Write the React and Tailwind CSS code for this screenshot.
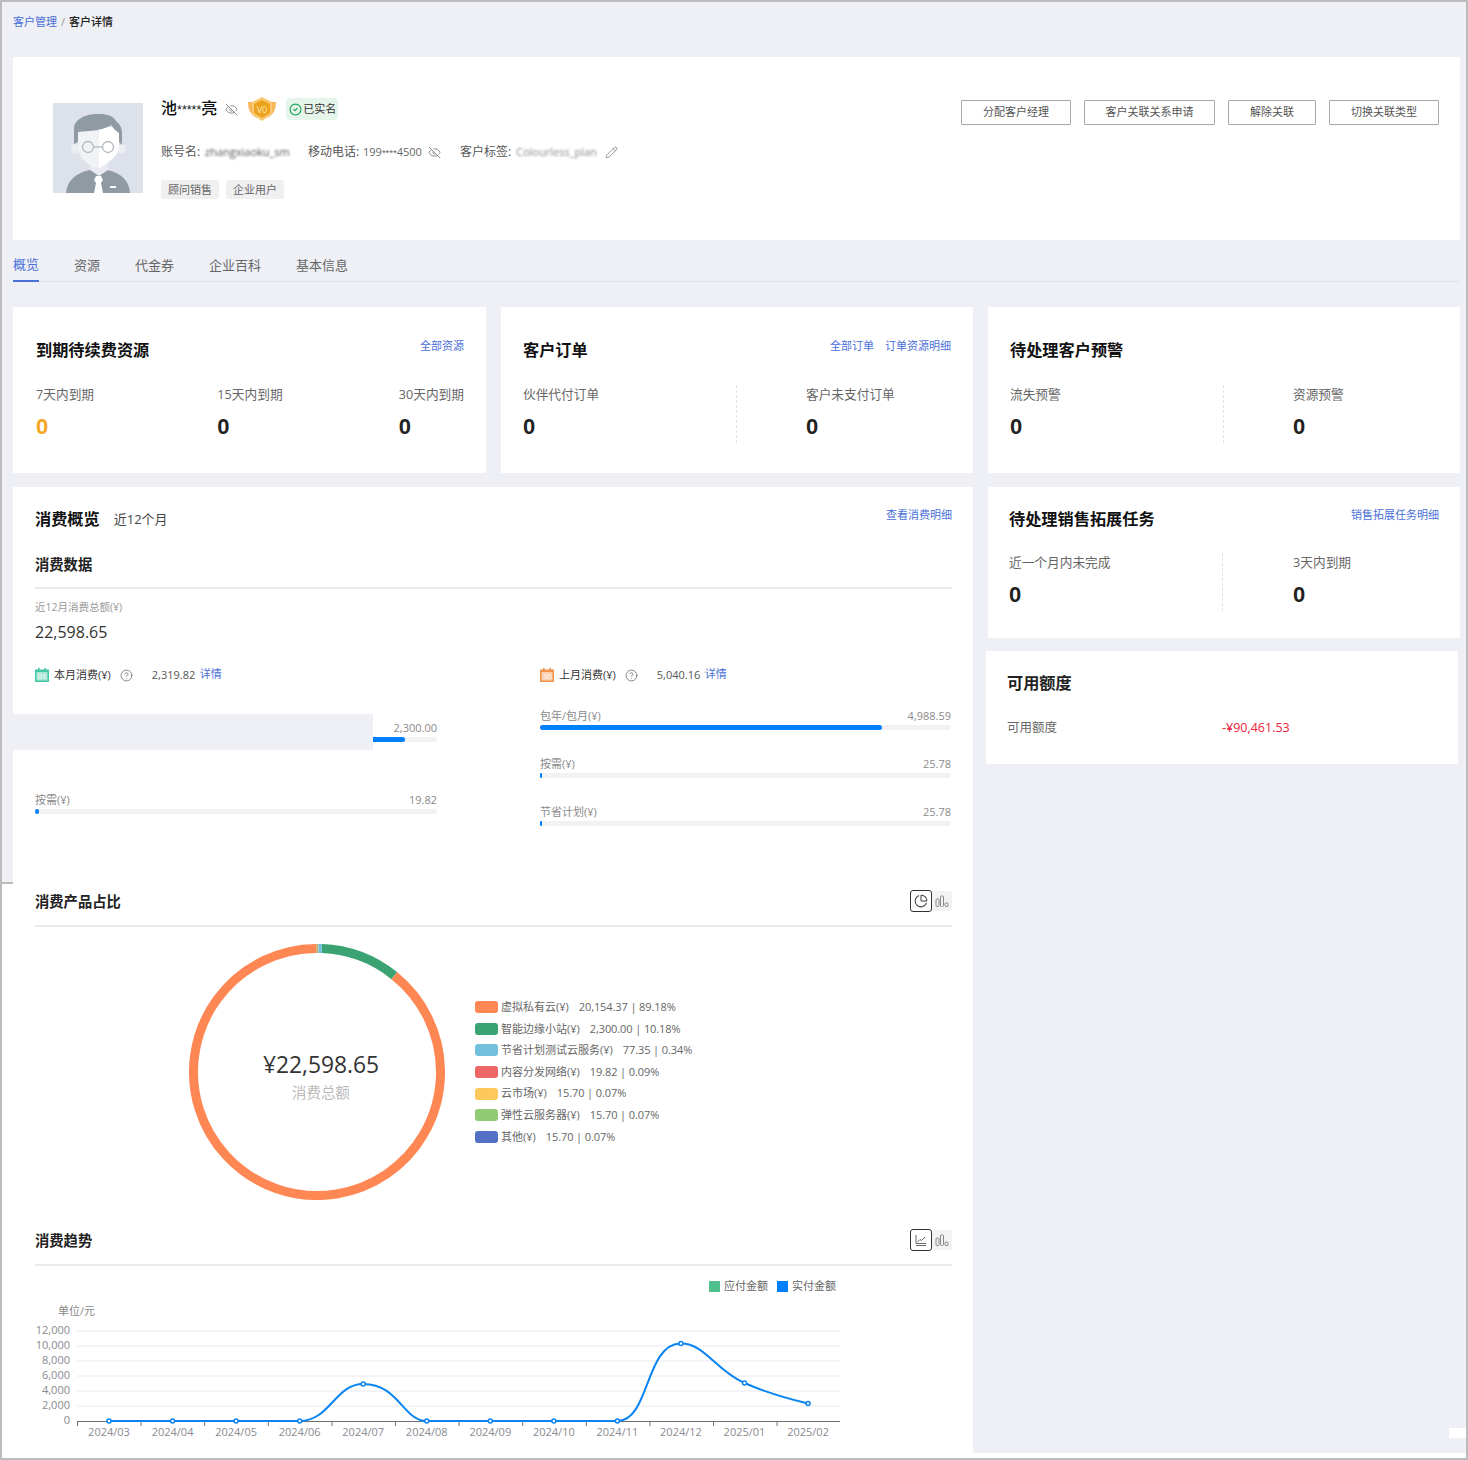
import React from 'react';
import { ChartPie, CircleCheck, CircleHelp, EyeOff, Pencil } from 'lucide-react';

const donutParts = [
  { color: '#ff8753', from: 38.7, to: 359.6 },
  { color: '#3ba272', from: 2.2, to: 38.7 },
  { color: '#73c0de', from: 0.6, to: 2.2 },
  { color: '#c9b27a', from: 359.6, to: 360.6 },
];

const legendRows = [
  { color: '#ff8753', name: '虚拟私有云(¥)', value: '20,154.37 | 89.18%' },
  { color: '#3ba272', name: '智能边缘小站(¥)', value: '2,300.00 | 10.18%' },
  { color: '#73c0de', name: '节省计划测试云服务(¥)', value: '77.35 | 0.34%' },
  { color: '#ee6666', name: '内容分发网络(¥)', value: '19.82 | 0.09%' },
  { color: '#fdc85c', name: '云市场(¥)', value: '15.70 | 0.07%' },
  { color: '#91cc75', name: '弹性云服务器(¥)', value: '15.70 | 0.07%' },
  { color: '#5470c6', name: '其他(¥)', value: '15.70 | 0.07%' },
];

const months = ['2024/03', '2024/04', '2024/05', '2024/06', '2024/07', '2024/08', '2024/09', '2024/10', '2024/11', '2024/12', '2025/01', '2025/02'];
const pointY = [155, 155, 155, 155, 118, 155, 155, 155, 155, 77.5, 117, 137.5];
const yTicks = ['12,000', '10,000', '8,000', '6,000', '4,000', '2,000', '0'];

const arcPath = (from, to) => {
  const r = 123.5;
  const point = (deg) => {
    const rad = (deg * Math.PI) / 180;
    return `${128 + r * Math.sin(rad)} ${128 - r * Math.cos(rad)}`;
  };
  return `M ${point(from)} A ${r} ${r} 0 ${to - from > 180 ? 1 : 0} 1 ${point(to)}`;
};

const Avatar = () => (
  <svg width="90" height="90" viewBox="0 0 90 90" className="mt-[5px] shrink-0">
    <rect width="90" height="90" fill="#dde1e9" />
    <path d="M13 90c1-12 9-20 24-23h17c15 3 22 11 23 23z" fill="#8f9aa3" />
    <path d="M37 58h18v9l-9 6-9-6z" fill="#e9ebf0" />
    <path d="M43 73h5l2 4-2 3 2 10h-9l2-10-2-3z" fill="#fff" />
    <rect x="57" y="83" width="6" height="2" fill="#fff" />
    <ellipse cx="22" cy="46" rx="4" ry="5" fill="#eceef2" />
    <ellipse cx="69" cy="46" rx="4" ry="5" fill="#eceef2" />
    <path d="M25 28h21v37c-10-1-21-10-21-21z" fill="#f1f2f6" />
    <path d="M46 24h20v20c0 8-8 14-20 21z" fill="#fff" />
    <path d="M21 41V26c0-9 10-15 24-15 8 0 15 1 18 7 4 3 6 7 6 12v12l-3-3v-9c-3-2-6-5-8-8-6 5-22 6-33 7v10z" fill="#8f9aa3" />
    <circle cx="35" cy="44" r="5.500" fill="none" stroke="#b2b8c0" strokeWidth="1.300" />
    <circle cx="55" cy="44" r="5.500" fill="none" stroke="#b2b8c0" strokeWidth="1.300" />
    <path d="M40.500 44h9" stroke="#b2b8c0" strokeWidth="1.300" />
  </svg>
);

const LevelBadge = () => (
  <svg width="30" height="24" viewBox="0 0 30 24" className="ml-[9px]">
    <path d="M1 5c0 8 3 13 9 16l-2-6-3-10z" fill="#f7b75a" />
    <path d="M29 5c0 8-3 13-9 16l2-6 3-10z" fill="#f7b75a" />
    <path d="M15 0l10 5v12l-10 7-10-7V5z" fill="#f9c874" />
    <path d="M15 3l8 4v9l-8 5-8-5V7z" fill="#eda21c" />
    <text x="15" y="15.500" textAnchor="middle" fontSize="9" fill="#ffe7b5">V0</text>
  </svg>
);

const CalendarIcon = ({ color, label }) => (
  <svg width="14" height="14" viewBox="0 0 14 14" className="shrink-0">
    <rect x="3" y="0" width="1.600" height="3" fill={color} />
    <rect x="9.400" y="0" width="1.600" height="3" fill={color} />
    <rect x="0" y="1.500" width="14" height="12.500" fill={color} />
    <rect x="1.500" y="4" width="11" height="8.500" fill="#fff" opacity="0.550" />
    <text x="7" y="11.400" textAnchor="middle" fontSize="8" fill="#fff">{label}</text>
  </svg>
);

const BarsIcon = () => (
  <svg width="14" height="14" viewBox="0 0 14 14" fill="none" stroke="#888" strokeWidth="1">
    <rect x="1" y="5" width="3" height="7.500" rx="1" />
    <rect x="5.500" y="2" width="3" height="10.500" rx="1" />
    <rect x="10" y="9" width="3" height="3.500" rx="1" />
  </svg>
);

const LineIcon = () => (
  <svg width="14" height="14" viewBox="0 0 14 14" fill="none" stroke="#555" strokeWidth="0.900">
    <path d="M2 2v8.500h10" />
    <path d="M3.500 9l2.500-2.500 1.500 1 3.500-3.500" />
    <path d="M2 12.500h10" />
  </svg>
);

const ChartToggle = ({ children }) => (
  <div className="flex items-center">
    <div className="flex h-[22px] w-[22px] items-center justify-center rounded-[3px] border border-[#333] bg-white">{children}</div>
    <div className="flex h-[20px] w-[20px] items-center justify-center rounded-r-[3px] bg-[#f3f3f3]"><BarsIcon /></div>
  </div>
);

const Stat = ({ label, value, valueClass = 'text-[#222]', className = '' }) => (
  <div className={className}>
    <div className="h-[18px] text-[12.7px] leading-[18px] whitespace-nowrap text-[#666]">{label}</div>
    <div className={`mt-[11px] h-[26px] font-['Liberation_Sans'] text-[22px] leading-[26px] font-bold ${valueClass}`}>{value}</div>
  </div>
);

const CardHead = ({ title, links }) => (
  <div className="flex h-[24px] items-start justify-between">
    <div className="text-[16.2px] leading-[24px] font-bold text-[#111]">{title}</div>
    <div className="flex gap-[11px] text-[11px] leading-[16px] text-[#4a6fd8]">
      {links.map((link) => <span key={link}>{link}</span>)}
    </div>
  </div>
);

const SplitStats = ({ left, right, rightPad = 'pl-[69px]' }) => (
  <div className="flex">
    <Stat label={left} value="0" className="w-[213px]" />
    <div className="h-[58px] border-l border-dashed border-[#e3e3e3]" />
    <Stat label={right} value="0" className={rightPad} />
  </div>
);

const Progress = ({ label, value, percent, className = '' }) => (
  <div className={className}>
    <div className="flex h-[16px] justify-between text-[11px] leading-[16px] text-[#8a8a8a]">
      <span>{label}</span>
      <span>{value}</span>
    </div>
    <div className="mt-[1px] h-[5px] rounded-full bg-[#f2f2f2]">
      <div className="h-[5px] rounded-full bg-[#0080ff]" style={{ width: `${percent}%` }} />
    </div>
  </div>
);

const MonthHead = ({ color, day, title, amount }) => (
  <div className="flex h-[16px] items-center text-[11px] leading-[16px]">
    <CalendarIcon color={color} label={day} />
    <span className="ml-[5px] text-[#333]">{title}</span>
    <CircleHelp size={13} strokeWidth={1.4} className="ml-[9px] text-[#666]" />
    <span className="ml-[19px] w-[48px] text-[#555]">{amount}</span>
    <span className="mt-[-2px] text-[#4a6fd8]">详情</span>
  </div>
);

const TrendChart = () => {
  const xs = months.map((_, i) => 74 + i * 63.55);
  const line = `M ${xs[0]} 155 L ${xs[3]} 155 C 295 155 300 118 ${xs[4]} 118 C 364 118 368 155 ${xs[5]} 155 L ${xs[8]} 155 C 615 155 610 77.500 ${xs[9]} 77.500 C 670 77.500 680 104 ${xs[10]} 117 C 730 126 750 132 ${xs[11]} 137.500`;
  return (
    <svg width="917" height="187" viewBox="0 0 917 187" className="block">
      <rect x="674" y="15" width="11" height="11" fill="#4fc08d" />
      <text x="689" y="24" fontSize="11" fill="#666">应付金额</text>
      <rect x="742" y="15" width="11" height="11" fill="#0080ff" />
      <text x="757" y="24" fontSize="11" fill="#666">实付金额</text>
      <text x="23" y="49" fontSize="11" fill="#888">单位/元</text>
      {yTicks.map((tick, i) => (
        <g key={tick}>
          {i < 6 && <line x1="42" x2="805" y1={65 + i * 15} y2={65 + i * 15} stroke="#e8e9f5" />}
          <text x="35" y={67.500 + i * 15} textAnchor="end" fontSize="11" fill="#8a8a90">{tick}</text>
        </g>
      ))}
      <line x1="42" x2="805" y1="155.500" y2="155.500" stroke="#6e7079" />
      {months.map((month, i) => (
        <g key={month}>
          <line x1={42.500 + i * 63.6} x2={42.500 + i * 63.6} y1="155" y2="160" stroke="#6e7079" />
          <text x={xs[i]} y="170" textAnchor="middle" fontSize="11" fill="#8a8a90">{month}</text>
        </g>
      ))}
      <path d={line} fill="none" stroke="#0a84f0" strokeWidth="2" />
      {months.map((month, i) => (
        <circle key={month} cx={xs[i]} cy={pointY[i]} r="2" fill="#fff" stroke="#0a84f0" strokeWidth="1.500" />
      ))}
    </svg>
  );
};

export default function App() {
  return (
    <div className="relative h-[1460px] w-[1468px] border-2 border-[#bcbcbc] bg-[#eef0f5] font-['Open_Sans','Noto_Sans_CJK_SC',sans-serif]">
      <div className="h-[55px] pt-[12px] pl-[11px] text-[11px] leading-[16px]">
        <span className="text-[#4a6fd8]">客户管理</span>
        <span className="mx-[4px] text-[#999]">/</span>
        <span className="font-medium text-[#222]">客户详情</span>
      </div>

      {/* header card */}
      <div className="ml-[11px] flex h-[183px] w-[1447px] items-start justify-between bg-white pt-[41px] pr-[21px] pl-[40px]">
        <div className="flex">
          <Avatar />
          <div className="ml-[18px]">
            <div className="flex h-[22px] items-center">
              <span className="text-[16px] leading-[22px] font-medium text-[#111]">
                池<span className="font-['Liberation_Sans'] text-[12.5px]">*****</span>亮
              </span>
              <EyeOff size={13} strokeWidth={1.8} className="ml-[8px] text-[#888]" />
              <LevelBadge />
              <div className="ml-[9px] flex h-[22px] items-center rounded-[4px] bg-[#e6f5ea] pr-[2px] pl-[3px] text-[11px] text-[#333]">
                <CircleCheck size={13} strokeWidth={2} className="mr-[1px] text-[#12a150]" />
                已实名
              </div>
            </div>
            <div className="mt-[23px] flex h-[18px] items-center text-[12px] leading-[18px] whitespace-nowrap text-[#555]">
              <span className="w-[44px]">账号名:</span>
              <span className="w-[84px] overflow-hidden text-[11px] text-[#555] blur-[1.2px]">zhangxiaoku_sm</span>
              <span className="ml-[19px] w-[55px]">移动电话:</span>
              <span className="w-[57px] text-[11px] text-[#666]">199<span className="font-['Liberation_Sans'] text-[9.5px]">****</span>4500</span>
              <EyeOff size={13} strokeWidth={1.8} className="ml-[8px] text-[#888]" />
              <span className="ml-[19px] w-[56px]">客户标签:</span>
              <span className="w-[80px] overflow-hidden text-[11px] text-[#888] blur-[1.2px]">Colourless_plan</span>
              <Pencil size={13} strokeWidth={1.2} className="ml-[9px] text-[#666]" />
            </div>
            <div className="mt-[19px] flex h-[19px] gap-[7px] text-[11px] leading-[19px] text-[#666]">
              <span className="rounded-[3px] bg-[#f0f0f0] px-[7px]">顾问销售</span>
              <span className="rounded-[3px] bg-[#f0f0f0] px-[7px]">企业用户</span>
            </div>
          </div>
        </div>
        <div className="mt-[2px] flex gap-[13px]">
          <button className="h-[25px] w-[110px] rounded-[1px] border border-[#a8a8a8] bg-white text-[11px] text-[#555]">分配客户经理</button>
          <button className="h-[25px] w-[131px] rounded-[1px] border border-[#a8a8a8] bg-white text-[11px] text-[#555]">客户关联关系申请</button>
          <button className="h-[25px] w-[88px] rounded-[1px] border border-[#a8a8a8] bg-white text-[11px] text-[#555]">解除关联</button>
          <button className="h-[25px] w-[110px] rounded-[1px] border border-[#a8a8a8] bg-white text-[11px] text-[#555]">切换关联类型</button>
        </div>
      </div>

      {/* tabs */}
      <div className="ml-[11px] flex h-[42px] w-[1447px] gap-[35px] border-b border-[#dfe1e8] text-[13px] text-[#666]">
        <div className="mb-[-1px] flex items-center border-b-2 border-[#4a6fd8] pt-[10px] text-[#4a6fd8]">概览</div>
        {['资源', '代金券', '企业百科', '基本信息'].map((tab) => (
          <div key={tab} className="flex items-center pt-[10px]">{tab}</div>
        ))}
      </div>

      {/* summary cards */}
      <div className="mt-[25px] ml-[11px] grid h-[166px] w-[1447px] grid-cols-[473px_472px_472px] gap-[15px]">
        <div className="bg-white pt-[31px] pr-[22px] pl-[23px]">
          <CardHead title="到期待续费资源" links={['全部资源']} />
          <div className="mt-[23px] flex">
            <Stat label="7天内到期" value="0" valueClass="text-[#f5a623]" className="w-[181.5px]" />
            <Stat label="15天内到期" value="0" className="w-[181.5px]" />
            <Stat label="30天内到期" value="0" />
          </div>
        </div>
        <div className="bg-white px-[22px] pt-[31px]">
          <CardHead title="客户订单" links={['全部订单', '订单资源明细']} />
          <div className="mt-[23px]"><SplitStats left="伙伴代付订单" right="客户未支付订单" /></div>
        </div>
        <div className="bg-white px-[22px] pt-[31px]">
          <CardHead title="待处理客户预警" links={[]} />
          <div className="mt-[23px]"><SplitStats left="流失预警" right="资源预警" /></div>
        </div>
      </div>

      <div className="mt-[14px] flex">
        <div className="w-[971px]">
          {/* consumption overview */}
          <div className="relative ml-[11px] h-[396px] bg-white pt-[22px] pr-[21px] pl-[22px]">
            <div className="flex h-[20px] items-start justify-between">
              <div className="flex items-center">
                <span className="text-[16.2px] leading-[20px] font-bold text-[#111]">消费概览</span>
                <span className="ml-[14px] text-[13px] leading-[20px] text-[#444]">近12个月</span>
              </div>
              <span className="mt-[-2px] text-[11px] leading-[16px] text-[#4a6fd8]">查看消费明细</span>
            </div>
            <div className="mt-[26px] h-[34px] border-b-2 border-[#ebebeb] text-[14.3px] leading-[20px] font-bold text-[#222]">消费数据</div>
            <div className="mt-[10px] h-[16px] text-[10.5px] leading-[16px] text-[#999]">近12月消费总额(¥)</div>
            <div className="mt-[7px] h-[20px] text-[16px] leading-[20px] text-[#333]">22,598.65</div>
            <div className="mt-[25px] grid grid-cols-[402px_411px] gap-[103px]">
              <div>
                <MonthHead color="#45c6a4" day="01" title="本月消费(¥)" amount="2,319.82" />
                <Progress label="包年/包月(¥)" value="2,300.00" percent={92} className="mt-[37px]" />
                <Progress label="按需(¥)" value="19.82" percent={1} className="mt-[50px]" />
              </div>
              <div>
                <MonthHead color="#f2914a" day="30" title="上月消费(¥)" amount="5,040.16" />
                <Progress label="包年/包月(¥)" value="4,988.59" percent={83.2} className="mt-[25px]" />
                <Progress label="按需(¥)" value="25.78" percent={0.5} className="mt-[26px]" />
                <Progress label="节省计划(¥)" value="25.78" percent={0.5} className="mt-[26px]" />
              </div>
            </div>
            <div className="absolute top-[227px] left-0 h-[36px] w-[360px] bg-[#eef0f5]" />
          </div>

          {/* product share and trend */}
          <div className="relative h-[570px] bg-white pr-[21px] pl-[33px]">
            <div className="absolute top-[-1px] left-0 h-[2px] w-[11px] bg-[#bcbcbc]" />
            <div className="flex h-[44px] items-start justify-between border-b-2 border-[#ebebeb] pt-[7px]">
              <div className="mt-[1px] text-[14.3px] leading-[22px] font-bold text-[#222]">消费产品占比</div>
              <ChartToggle><ChartPie size={14} strokeWidth={1.8} className="text-[#444]" /></ChartToggle>
            </div>
            <div className="flex h-[295px] items-start">
              <svg width="256" height="256" viewBox="0 0 256 256" className="mt-[17px] ml-[154px] shrink-0">
                {donutParts.map((part) => (
                  <path key={part.color} d={arcPath(part.from, part.to)} fill="none" stroke={part.color} strokeWidth="9" />
                ))}
                <text x="132" y="129" textAnchor="middle" fontSize="22.8" fill="#333">¥22,598.65</text>
                <text x="132" y="154" textAnchor="middle" fontSize="14.5" fill="#bbb">消费总额</text>
              </svg>
              <div className="mt-[69.5px] ml-[30px]">
                {legendRows.map((row) => (
                  <div key={row.name} className="flex h-[21.6px] items-center text-[11px] text-[#666]">
                    <span className="h-[12px] w-[23px] rounded-[3px]" style={{ backgroundColor: row.color }} />
                    <span className="ml-[3px]">{row.name}</span>
                    <span className="ml-[10px] tracking-[-0.1px]">{row.value}</span>
                  </div>
                ))}
              </div>
            </div>
            <div className="flex h-[44px] items-start justify-between border-b-2 border-[#ebebeb] pt-[7px]">
              <div className="mt-[1px] text-[14.3px] leading-[22px] font-bold text-[#222]">消费趋势</div>
              <ChartToggle><LineIcon /></ChartToggle>
            </div>
            <TrendChart />
          </div>
        </div>

        {/* right column */}
        <div className="ml-[13px] w-[474px]">
          <div className="ml-[2px] h-[151px] w-[472px] bg-white px-[21px] pt-[20px]">
            <CardHead title="待处理销售拓展任务" links={['销售拓展任务明细']} />
            <div className="mt-[22px]"><SplitStats left="近一个月内未完成" right="3天内到期" rightPad="pl-[70px]" /></div>
          </div>
          <div className="mt-[13px] h-[113px] w-[472px] bg-white px-[21px] pt-[20px]">
            <div className="text-[16.2px] leading-[24px] font-bold text-[#222]">可用额度</div>
            <div className="mt-[24px] flex text-[12.5px] leading-[18px]">
              <span className="w-[215px] text-[#666]">可用额度</span>
              <span className="text-[#f0243c]">-¥90,461.53</span>
            </div>
          </div>
        </div>
      </div>

      <div className="h-[5px] bg-white" />
      <div className="absolute top-[1426px] right-0 h-[10px] w-[17px] bg-white" />
    </div>
  );
}
